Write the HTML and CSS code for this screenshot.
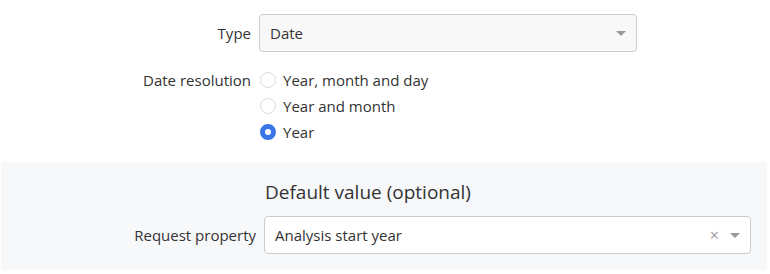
FILE: index.html
```html
<!DOCTYPE html>
<html lang="en">
  <head>
    <meta charset="UTF-8" />
    <title>Parameter</title>
    <link rel="stylesheet" href="styles.css">
  </head>
  <body>
    <div class="form">
      <div class="row row-type">
        <label class="label">Type</label>
        <div class="select select-type">
          <span class="value">Date</span>
          <span class="caret"></span>
        </div>
      </div>
      <div class="row row-radio">
        <label class="label">Date resolution</label>
        <ul class="radios">
          <li><span class="radio"></span>Year, month and day</li>
          <li><span class="radio"></span>Year and month</li>
          <li><span class="radio checked"></span>Year</li>
        </ul>
      </div>
    </div>
    <div class="panel">
      <h3 class="panel-title">Default value (optional)</h3>
      <div class="row row-request">
        <label class="label">Request property</label>
        <div class="select select-request">
          <span class="value">Analysis start year</span>
          <span class="clear">&times;</span>
          <span class="caret"></span>
        </div>
      </div>
    </div>
  </body>
</html>
```

FILE: styles.css
```css
* {
  box-sizing: border-box;
}
body {
  margin: 0;
  font-family: "Open Sans", "Noto Sans", sans-serif;
  font-size: 15px;
  color: #333;
  background: #fff;
}
.form {
  padding-top: 14px;
  padding-bottom: 17px;
}
.row {
  display: grid;
  grid-template-columns: 251px 378px;
  column-gap: 8px;
}
.label {
  text-align: right;
}
.row-type .label {
  align-self: center;
}
.select {
  display: flex;
  align-items: center;
  height: 38px;
  padding: 0 10px 0 10px;
  border: 1px solid #ccc;
  border-radius: 4px;
  background: #f8f8f8;
}
.select .value {
  flex: 1;
}
.caret {
  width: 0;
  height: 0;
  border-left: 5px solid transparent;
  border-right: 5px solid transparent;
  border-top: 5px solid #999;
}
.row-radio {
  margin-top: 19px;
}
.row-radio .label {
  line-height: 26px;
  margin-top: -4px;
}
.radios {
  margin: -4px 0 0;
  padding: 0;
  list-style-type: none;
}
.radios li {
  display: flex;
  align-items: center;
  height: 26px;
}
.radio {
  width: 16px;
  height: 16px;
  margin: 0 7px 0 1px;
  border: 1px solid #ddd;
  border-radius: 50%;
  background: #fff;
}
.radio.checked {
  border: 5px solid #3b73e8;
}
.panel {
  margin: 0 3px 0 1px;
  padding: 16px 0 16px;
  background: #f7f8fa;
}
.panel-title {
  margin: 0 0 10px 264px;
  font-size: 19px;
  font-weight: normal;
  line-height: 28px;
}
.row-request {
  grid-template-columns: 255px 487px;
}
.row-request .label {
  align-self: center;
}
.select-request {
  background: #fff;
}
.clear {
  margin-right: 11px;
  color: #999;
  font-size: 16px;
}
```
